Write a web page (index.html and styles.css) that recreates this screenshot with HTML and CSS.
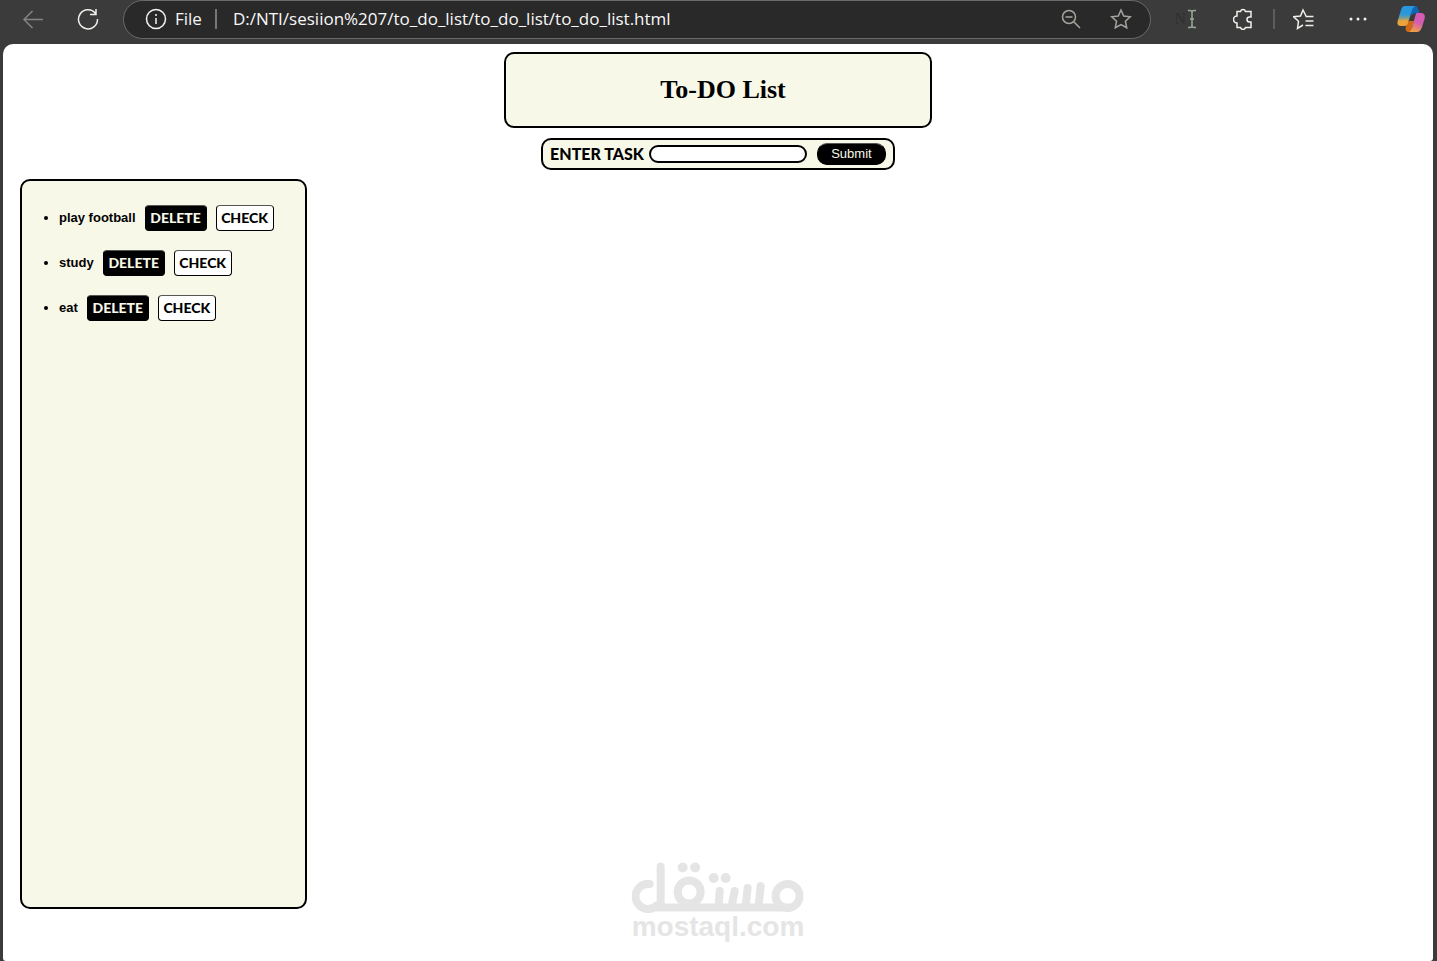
FILE: index.html
```html
<!DOCTYPE html>
<html lang="en">
<head>
<meta charset="utf-8">
<title>To-DO List</title>
<link rel="stylesheet" href="styles.css">
</head>
<body>
<header class="toolbar">
  <nav class="nav-buttons">
    <button class="icon-button dim" aria-label="Back"><svg width="22" height="22" viewBox="0 0 22 22"><path d="M21 11.500H2M10.500 3 2 11.500l8.500 8.500"/></svg></button>
    <button class="icon-button" aria-label="Refresh"><svg width="22" height="22" viewBox="0 0 22 22"><path d="M18.500 5.500A9.500 9.500 0 1 0 20.500 11M19 1v5.500h-6"/></svg></button>
  </nav>
  <div class="address">
    <button class="site-info"><svg width="22" height="22" viewBox="0 0 22 22"><circle cx="11" cy="11" r="9.500"/><path d="M11 10v6M11 6v2"/></svg>File</button>
    <span class="address-divider"></span>
    <input class="url" type="text" aria-label="Address" value="D:/NTI/sesiion%207/to_do_list/to_do_list/to_do_list.html">
    <button class="icon-button muted" aria-label="Zoom out"><svg width="22" height="22" viewBox="0 0 22 22"><circle cx="9" cy="9" r="6.500"/><path d="M5.500 9h7M14 14l6 6"/></svg></button>
    <button class="icon-button muted" aria-label="Add to favorites"><svg width="22" height="22" viewBox="0 0 22 22"><path d="M11 2l2.700 6 6.600.700-4.900 4.500 1.300 6.500L11 16.500l-5.700 3.200 1.300-6.500L1.700 8.700 8.300 8z"/></svg></button>
  </div>
  <div class="tools">
    <span class="cursor-mark"><span>N</span><svg width="10" height="20" viewBox="0 0 10 20"><path d="M1 1.500h2q2 0 2 2v13q0 2-2 2H1M9 1.500H7q-2 0-2 2v13q0 2 2 2h2M3 10h4"/></svg></span>
    <button class="icon-button" aria-label="Extensions"><svg width="22" height="22" viewBox="0 0 22 22"><path d="M4 3.500h3.500a2.600 2.600 0 0 1 5 0H18V9h-1.500a2.500 2.500 0 0 0 0 5H18v5.500h-5.500a2.600 2.600 0 0 1-5 0H4V15a3 3 0 0 1 0-7z"/></svg></button>
    <span class="tool-divider"></span>
    <button class="icon-button" aria-label="Favorites"><svg width="22" height="22" viewBox="0 0 22 22"><path d="M13 8 10 2 7.500 8l-7 .700 5 4.500L4.500 20.500l5.500-3.500M12.500 8.500h8M12.500 13h8M12.500 17.500h8"/></svg></button>
    <button class="icon-button" aria-label="Settings and more"><svg width="22" height="22" viewBox="0 0 22 22"><g class="dots"><circle cx="4" cy="11" r="1.500"/><circle cx="11" cy="11" r="1.500"/><circle cx="18" cy="11" r="1.500"/></g></svg></button>
    <button class="icon-button copilot" aria-label="Copilot"><svg width="28" height="28" viewBox="0 0 28 28">
      <defs>
        <linearGradient id="cool" x1="0" y1="0" x2="0" y2="1"><stop offset=".4" stop-color="#2997db"/><stop offset=".6" stop-color="#799f91"/><stop offset=".75" stop-color="#eca33b"/></linearGradient>
        <linearGradient id="warm" x1="0.600" y1="0" x2="0.300" y2="1"><stop offset=".45" stop-color="#d65bb2"/><stop offset=".7" stop-color="#e07a82"/><stop offset="1" stop-color="#f0a13d"/></linearGradient>
      </defs>
      <path fill="#1264b5" d="M14 1h4q2.500 0 3.200 3l1.300 4.500H18q-3 0-4 3z"/>
      <path fill="#cf6719" d="M9 20l3-4h5l-3 11h-2.500Q9 27 8.500 24z"/>
      <path fill="url(#cool)" d="M8 1h10q-2 1-3 4l-4 13q-1 3-4 3H4q-5 0-3-6L4 5q1-4 4-4z"/>
      <path fill="url(#warm)" d="M20 8h4q5 0 3.500 6L25 22q-1.500 5-5 5h-8q2-1 3-4l3-11q1-4 2-4z"/>
    </svg></button>
  </div>
</header>

<main class="page">
  <div class="title-box"><h1>To-DO List</h1></div>
  <form class="task-form">
    <label for="task">ENTER TASK</label>
    <input class="task-input" id="task" type="text">
    <button class="submit" type="button">Submit</button>
  </form>
  <section class="list-box">
    <ul class="tasks">
      <li><div class="task"><span>play football</span><button class="delete">DELETE</button><button class="check">CHECK</button></div></li>
      <li><div class="task"><span>study</span><button class="delete">DELETE</button><button class="check">CHECK</button></div></li>
      <li><div class="task"><span>eat</span><button class="delete">DELETE</button><button class="check">CHECK</button></div></li>
    </ul>
  </section>
  <div class="watermark">
    <svg width="172" height="52" viewBox="0 0 172 52" role="img" aria-label="مستقل">
      <g class="mark-lines">
        <path d="M18 22A12.500 12.500 0 1 0 25 43.500M29 4.500V43"/>
        <path d="M26 45.500H156"/>
        <circle cx="57.500" cy="30" r="11.500"/>
        <circle cx="156" cy="34" r="12"/>
        <path d="M88 29l-1 15M103 29l-3 15M116 26l-2 18M129 24l-2 20"/>
      </g>
      <g class="mark-dots"><circle cx="51" cy="5.500" r="5"/><circle cx="63.500" cy="5.500" r="5"/><circle cx="82" cy="16" r="5"/><circle cx="94" cy="16" r="5"/></g>
    </svg>
    <span>mostaql.com</span>
  </div>
</main>
</body>
</html>
```
FILE: styles.css
```css
* { box-sizing: border-box; }

body {
  margin: 0;
  min-height: 100vh;
  display: flex;
  flex-direction: column;
  background: #3b3b3b;
  font-family: "Liberation Sans", Arial, sans-serif;
}

button { margin: 0; padding: 0; border: 0; background: none; font: inherit; color: inherit; }

/* Browser toolbar */
.toolbar {
  height: 44px;
  padding: 0 12px 5px 22px;
  display: flex;
  align-items: center;
  color: #f4f4f4;
}
.nav-buttons { display: flex; gap: 33px; margin-right: 24px; }
.nav-buttons, .tools { padding-bottom: 1px; }
.icon-button { display: flex; color: #f0f0ec; }
.icon-button svg, .site-info svg, .cursor-mark svg { fill: none; stroke: currentColor; stroke-width: 1.5; }
.icon-button.dim { color: #858585; }
.icon-button.muted { color: #a3a69f; }
.address {
  flex: 1;
  align-self: stretch;
  display: flex;
  align-items: center;
  padding: 0 18px 2px 21px;
  border: 1px solid #6a6a6a;
  border-radius: 20px;
  background: #292929;
  font: 17px "Open Sans", sans-serif;
}
.site-info { display: flex; align-items: center; gap: 8px; }
.address-divider { width: 2px; height: 20px; margin: 0 16px 0 13px; background: #777; }
.url { flex: 1; min-width: 0; margin-right: 28px; padding: 0; border: 0; background: none; color: #f8f8f8; font: inherit; }
.icon-button.muted + .icon-button.muted { margin-left: 28px; }
.tools { display: flex; align-items: center; margin-left: 23px; }
.cursor-mark { display: flex; align-items: center; gap: 1px; margin-right: 36px; color: #9bab9b; }
.cursor-mark span { color: #303030; font: 16px "Liberation Serif", serif; }
.tool-divider { width: 2px; height: 20px; margin: 0 18px; background: #5d5d5d; }
.tools .icon-button + .icon-button { margin-left: 32px; }
.tools .icon-button + .icon-button.copilot { margin-left: 28px; }
.icon-button.copilot svg { stroke: none; }
.dots { fill: currentColor; stroke: none; }

/* Page */
.page {
  position: relative;
  flex: 1;
  margin: 0 4px 0 3px;
  padding: 8px 17px 52px;
  display: flex;
  flex-direction: column;
  align-items: center;
  border-radius: 10px 10px 3px 3px;
  background: #fff;
}
.title-box, .task-form, .list-box {
  border: 2px solid #000;
  border-radius: 10px;
  background: #f8f8e8;
}
.title-box { width: 428px; max-width: 100%; padding: 21px 0 21px 10px; text-align: center; }
h1 { margin: 0; font: bold 26px/30px "Liberation Serif", "Times New Roman", serif; }
.task-form {
  display: flex;
  align-items: center;
  height: 32px;
  margin: 10px 0 9px;
  padding: 0 7px;
}
.task-form label { padding-bottom: 2px; font: 900 16px Lato, sans-serif; }
.task-input { width: 158px; height: 18px; margin: 0 10px 0 5px; padding: 0 8px; border: 2px solid #000; border-radius: 10px; background: #fff; }
.submit {
  width: 69px;
  height: 22px;
  padding-bottom: 2px;
  border: 1px solid #000;
  border-top-color: #555;
  border-radius: 10px;
  background: #000;
  color: #f8f8e8;
  font-size: 13px;
}
.list-box { flex: 1; align-self: flex-start; width: 287px; padding: 24px 0; }
.tasks {
  margin: 0;
  padding: 0 0 0 37px;
  display: flex;
  flex-direction: column;
  gap: 19px;
  font-size: 13px;
  font-weight: bold;
}
.task { display: inline-flex; align-items: center; }
.task span { padding-bottom: 2px; }
.task button {
  height: 26px;
  padding-bottom: 2px;
  margin-left: 9px;
  border: 1px solid #000;
  border-top-color: #555;
  border-radius: 4px;
  font: 900 14px Lato, sans-serif;
}
.task .delete { width: 62px; background: #000; color: #f8f8e8; }
.task .check { width: 58px; background: #fff; color: #000; }

.watermark {
  position: absolute;
  bottom: 21px;
  left: 50%;
  transform: translateX(-50%);
  display: flex;
  flex-direction: column;
  align-items: center;
  color: #e5e5e5;
  font: bold 28px/26px "Liberation Sans", Arial, sans-serif;
}
.mark-lines { fill: none; stroke: currentColor; stroke-width: 8; stroke-linecap: round; }
.mark-dots { fill: currentColor; }
```
